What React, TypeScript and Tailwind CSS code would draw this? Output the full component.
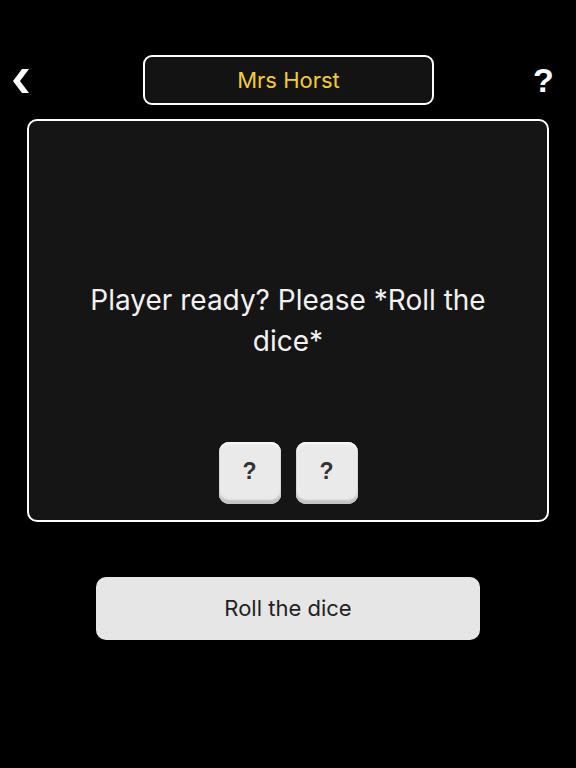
import React from "react";

const Die = () => (
  <div className="flex h-[62px] w-[62px] items-center justify-center rounded-[10px] bg-[#eaeaea] shadow-[inset_0_-4px_2px_#c4c4c4,inset_0_2px_2px_#fafafa,inset_0_0_0_1px_#d4d4d4]">
    <span className="text-[23px] font-bold leading-none text-[#333] font-['Liberation_Sans',sans-serif] pb-[3px]">?</span>
  </div>
);

export default function App() {
  return (
    <div className="h-[768px] w-[576px] bg-black font-['Inter',sans-serif]">
      <div className="flex items-center pt-[55px] pl-[12px]">
        <svg width="17" height="24" viewBox="0 0 17 24" className="mt-[2px]">
          <polygon points="10,0 17,0 8,12 17,24 10,24 1,12" fill="white" />
        </svg>
        <div className="ml-[114px] flex h-[50px] w-[291px] items-center justify-center rounded-[9px] border-2 border-white bg-[#131313]">
          <span className="text-[22px] text-[#f2cc2c]">Mrs Horst</span>
        </div>
        <span className="ml-[99px] text-[34px] font-bold leading-none text-white font-['Liberation_Sans',sans-serif]">?</span>
      </div>

      <div className="mx-[27px] mt-[14px] flex h-[403px] flex-col items-center rounded-[10px] border-2 border-white bg-[#151515] px-[50px] pt-[159px]">
        <p className="text-center text-[28px] leading-[41px] text-[#f2f2f2]">
          Player ready? Please *Roll the dice*
        </p>
        <div className="mt-[80px] flex gap-[15px]">
          <Die />
          <Die />
        </div>
      </div>

      <div className="mx-[96px] mt-[55px] flex h-[63px] items-center justify-center rounded-[10px] bg-[#e6e6e6]">
        <span className="text-[22px] text-[#222]">Roll the dice</span>
      </div>
    </div>
  );
}
